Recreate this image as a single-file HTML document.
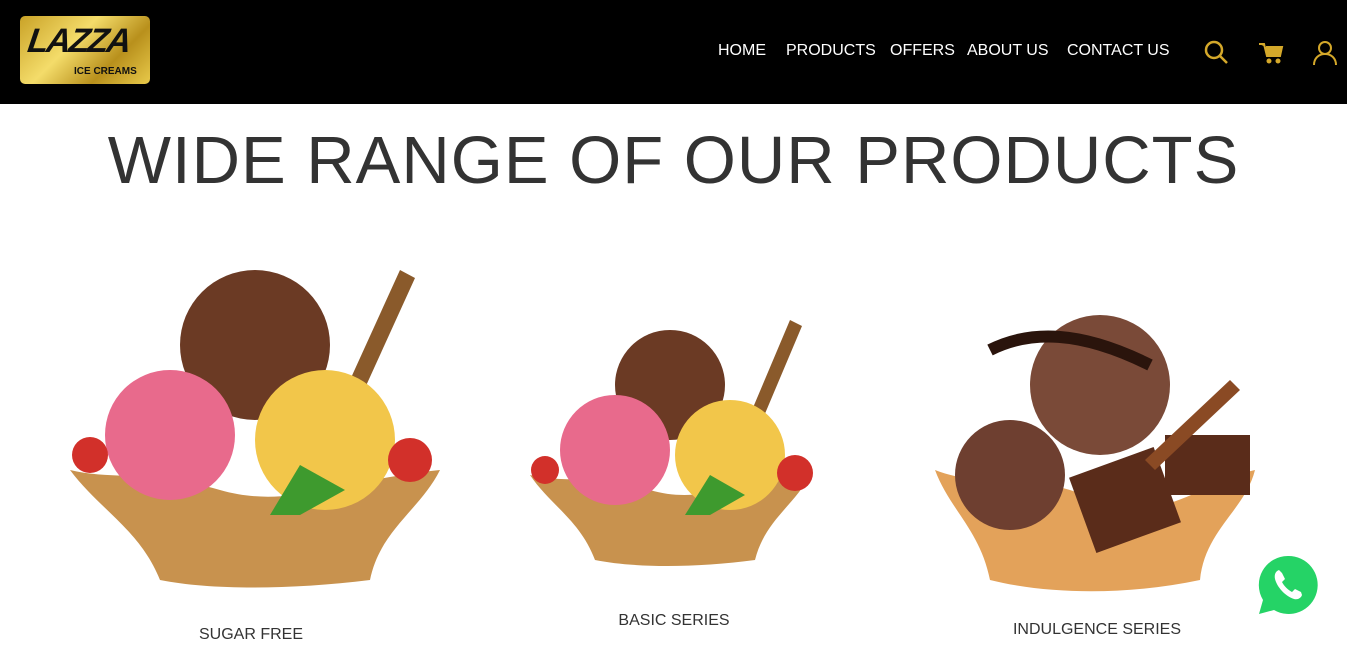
<!DOCTYPE html>
<html><head><meta charset="utf-8"><style>
*{margin:0;padding:0;box-sizing:border-box}
body{width:1347px;height:655px;overflow:hidden;background:#fff;font-family:"Liberation Sans",sans-serif;position:relative}
.hdr{position:absolute;left:0;top:0;width:1347px;height:104px;background:#000}
.logo{position:absolute;left:20px;top:16px;width:130px;height:68px;border-radius:5px;background:linear-gradient(135deg,#c9a227,#f4dc6a 40%,#b8901c 70%,#e8c94a);}
.logo .l{position:absolute;left:8px;top:6px;font:italic 900 34px "Liberation Sans";color:#111;letter-spacing:-2px;transform:skew(-8deg)}
.logo .s{position:absolute;left:54px;top:50px;font:bold 10px "Liberation Sans";color:#111}
.nav{position:absolute;top:42px;color:#fff;font-size:16px}
.t{position:absolute;left:0;width:1347px;top:122px;text-align:center;font-size:67px;color:#333;font-weight:300;letter-spacing:1px}
.c{position:absolute;font-size:16px;color:#333;text-align:center;width:300px}
</style></head><body>
<div class="hdr">
<div class="logo"><div class="l">LAZZA</div><div class="s">ICE CREAMS</div></div>
<div class="nav" style="left:718px">HOME</div>
<div class="nav" style="left:786px">PRODUCTS</div>
<div class="nav" style="left:890px">OFFERS</div>
<div class="nav" style="left:967px">ABOUT US</div>
<div class="nav" style="left:1067px">CONTACT US</div>
<svg style="position:absolute;left:1204px;top:40px" width="26" height="26" viewBox="0 0 26 26"><circle cx="10" cy="10" r="8" fill="none" stroke="#d4a82a" stroke-width="2.5"/><path d="M16 16l7 7" stroke="#d4a82a" stroke-width="2.5"/></svg>
<svg style="position:absolute;left:1258px;top:41px" width="26" height="24" viewBox="0 0 26 24"><path d="M1 3h5l3 12h13l2-9H8" fill="#d4a82a" stroke="#d4a82a" stroke-width="2"/><circle cx="11" cy="20" r="2.5" fill="#d4a82a"/><circle cx="20" cy="20" r="2.5" fill="#d4a82a"/></svg>
<svg style="position:absolute;left:1312px;top:40px" width="26" height="26" viewBox="0 0 26 26"><circle cx="13" cy="8" r="6" fill="none" stroke="#d4a82a" stroke-width="2"/><path d="M2 25c0-7 5-11 11-11s11 4 11 11" fill="none" stroke="#d4a82a" stroke-width="2"/></svg>
</div>
<div class="t">WIDE RANGE OF OUR PRODUCTS</div>

<svg style="position:absolute;left:55px;top:260px" width="390" height="330" viewBox="0 0 390 330">
<path d="M345 10l15 8-50 110-15-8z" fill="#8a5a2b"/>
<circle cx="200" cy="85" r="75" fill="#6b3a24"/>
<path d="M15 210c40 10 80 0 150 20s120-10 220-20c-20 40-60 60-70 110-80 10-160 10-210 0-20-50-60-70-90-110z" fill="#c8924e"/>
<circle cx="115" cy="175" r="65" fill="#e86a8c"/>
<circle cx="270" cy="180" r="70" fill="#f2c64a"/>
<circle cx="35" cy="195" r="18" fill="#d2302a"/><circle cx="355" cy="200" r="22" fill="#d2302a"/>
<path d="M215 255l30-50 45 25-45 25z" fill="#3e9a2e"/>
</svg>
<svg style="position:absolute;left:520px;top:315px" width="300" height="260" viewBox="0 0 300 260">
<path d="M270 5l12 6-38 90-12-6z" fill="#8a5a2b"/>
<circle cx="150" cy="70" r="55" fill="#6b3a24"/>
<path d="M10 160c30 8 70 0 120 15s90-8 160-15c-15 30-45 45-55 85-60 8-120 8-160 0-15-40-45-55-65-85z" fill="#c8924e"/>
<circle cx="95" cy="135" r="55" fill="#e86a8c"/>
<circle cx="210" cy="140" r="55" fill="#f2c64a"/>
<circle cx="25" cy="155" r="14" fill="#d2302a"/><circle cx="275" cy="158" r="18" fill="#d2302a"/>
<path d="M165 200l25-40 35 20-35 20z" fill="#3e9a2e"/>
</svg>
<svg style="position:absolute;left:930px;top:310px" width="330" height="290" viewBox="0 0 330 290">
<path d="M5 160c50 20 100 0 160 30s110-20 160-30c-10 40-50 60-55 110-70 15-150 15-210 0-10-50-40-70-55-110z" fill="#e3a25a"/>
<circle cx="170" cy="75" r="70" fill="#7a4a38"/>
<circle cx="80" cy="165" r="55" fill="#6e3f30"/>
<path d="M60 40c40-20 90-20 160 15" stroke="#2a140c" stroke-width="12" fill="none"/>
<rect x="150" y="150" width="90" height="80" fill="#5a2c1a" transform="rotate(-20 195 190)"/>
<rect x="235" y="125" width="85" height="60" fill="#5a2c1a"/>
<path d="M215 150l85-80 10 10-85 80z" fill="#8a4a24"/>
</svg>

<div class="c" style="left:101px;top:626px">SUGAR FREE</div>
<div class="c" style="left:524px;top:612px">BASIC SERIES</div>
<div class="c" style="left:947px;top:621px">INDULGENCE SERIES</div>

<svg style="position:absolute;left:1257px;top:554px" width="62" height="62" viewBox="0 0 62 62">
<path d="M31 2a29 29 0 0 0-25 44L2 60l15-4A29 29 0 1 0 31 2z" fill="#25d366"/>
<path d="M22 16c-3 1-5 4-4 9 2 8 10 17 19 20 4 1 7-1 8-4l-1-3-6-3-3 3c-4-2-8-6-10-10l3-3-3-6z" fill="#fff"/>
</svg>
</body></html>
